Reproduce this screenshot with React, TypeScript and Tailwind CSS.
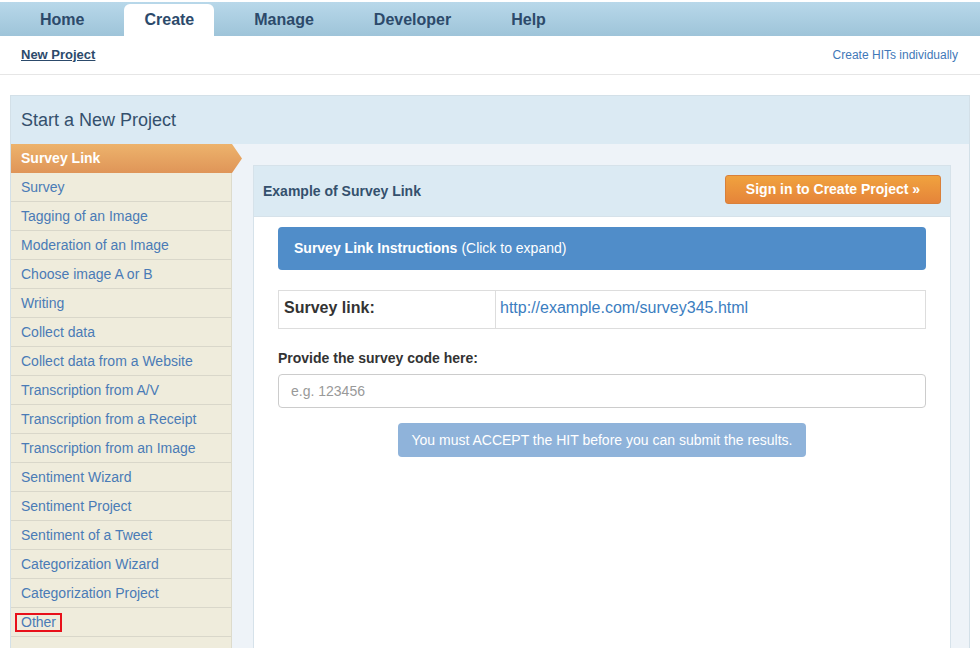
import React from "react";

const items = [
  "Survey",
  "Tagging of an Image",
  "Moderation of an Image",
  "Choose image A or B",
  "Writing",
  "Collect data",
  "Collect data from a Website",
  "Transcription from A/V",
  "Transcription from a Receipt",
  "Transcription from an Image",
  "Sentiment Wizard",
  "Sentiment Project",
  "Sentiment of a Tweet",
  "Categorization Wizard",
  "Categorization Project",
];

export default function App() {
  return (
    <div
      className="w-[980px] min-h-[648px] bg-white"
      style={{ fontFamily: '"Liberation Sans", Arial, Helvetica, sans-serif' }}
    >
      {/* Top nav */}
      <div className="pt-[2px]">
        <div className="h-[34px] bg-gradient-to-b from-[#b8d8ea] to-[#9ec4d9] flex items-end gap-5 pl-5">
          {["Home", "Create", "Manage", "Developer", "Help"].map((t) => (
            <div
              key={t}
              className={
                t === "Create"
                  ? "h-[32px] px-5 bg-white rounded-t-[6px] flex items-center text-[16px] font-bold text-[#2c4a6b]"
                  : "h-[32px] px-5 flex items-center text-[16px] font-bold text-[#2c4a6b]"
              }
            >
              {t}
            </div>
          ))}
        </div>
      </div>

      {/* Sub nav */}
      <div className="h-[39px] flex items-center justify-between pl-[21px] pr-[22px] border-b border-[#e6e6e6]">
        <span className="text-[13px] font-bold text-[#2c4a6b] underline">New Project</span>
        <span className="text-[12px] text-[#3f78b8]">Create HITs individually</span>
      </div>

      {/* Outer panel */}
      <div className="mt-5 ml-[10px] w-[960px] border border-[#d3e0e8]">
        <div className="h-[48px] bg-[#dbeaf3] flex items-center pl-[10px] text-[18px] text-[#34506d]">
          Start a New Project
        </div>
        <div className="flex bg-[#eef3f8]">
          {/* Sidebar */}
          <div className="w-[221px] shrink-0 bg-[#efecdc] border-r border-[#dddbcc]">
            <div className="relative h-[29px] bg-gradient-to-b from-[#edb36c] to-[#df9558] flex items-center pl-[10px] pb-[1px] text-[14px] font-bold text-white">
              Survey Link
              <svg
                className="absolute right-[-11px] top-0"
                width="11"
                height="29"
                viewBox="0 0 11 29"
              >
                <defs>
                  <linearGradient id="ag" x1="0" y1="0" x2="0" y2="1">
                    <stop offset="0" stopColor="#edb36c" />
                    <stop offset="1" stopColor="#df9558" />
                  </linearGradient>
                </defs>
                <polygon points="0,0 1,0 11,14.5 1,29 0,29" fill="url(#ag)" />
              </svg>
            </div>
            {items.map((t) => (
              <div
                key={t}
                className="h-[29px] flex items-center pl-[10px] text-[14px] text-[#4a7bb6] border-b border-[#d9d7ca]"
              >
                {t}
              </div>
            ))}
            <div className="h-[29px] flex items-center pl-[4px] border-b border-[#d9d7ca]">
              <span className="border-2 border-[#e8101a] px-[4px] leading-[14px] text-[14px] text-[#4a7bb6] h-[19px] flex items-center">
                Other
              </span>
            </div>
            <div className="h-[40px]"></div>
          </div>

          {/* Content */}
          <div className="flex-1 pl-[21px] pr-[18px] pt-[21px]">
            <div className="border border-[#d6e2ea] bg-white min-h-[500px]">
              <div className="h-[51px] bg-[#dbeaf3] border-b border-[#d6e2ea] flex items-start justify-between pl-[9px] pr-[9px]">
                <span className="text-[14px] font-bold text-[#34506d] mt-[15px]">Example of Survey Link</span>
                <div className="mt-[9px] h-[29px] w-[216px] rounded-[3px] bg-gradient-to-b from-[#f0a23e] to-[#e5843a] border border-[#d9803a] flex items-center justify-center text-[14px] font-bold text-white">
                  Sign in to Create Project »
                </div>
              </div>
              <div className="px-[24px] pt-[10px]">
                <div className="h-[43px] rounded-[4px] bg-[#508dc9] flex items-center pl-[16px] text-[14px] text-white">
                  <span className="font-bold">Survey Link Instructions</span>
                  <span className="ml-[4px]">(Click to expand)</span>
                </div>
                <div className="mt-5 h-[39px] border border-[#dddddd] flex">
                  <div className="w-[217px] border-r border-[#dddddd] flex items-center pl-[5px] pb-[3px] text-[16px] font-bold text-[#333333]">
                    Survey link:
                  </div>
                  <div className="flex items-center pl-[4px] pb-[3px] text-[16px] text-[#3b7dc0]">
                    http://example.com/survey345.html
                  </div>
                </div>
                <div className="mt-[20px] text-[14px] font-bold text-[#333333] leading-[18px]">
                  Provide the survey code here:
                </div>
                <div className="mt-[7px] h-[34px] rounded-[4px] border border-[#cccccc] flex items-center pl-[12px] text-[14px] text-[#999999]">
                  e.g. 123456
                </div>
                <div className="mt-[15px] flex justify-center">
                  <div className="h-[34px] w-[408px] rounded-[4px] bg-[#8fb3da] flex items-center justify-center text-[14px] text-white">
                    You must ACCEPT the HIT before you can submit the results.
                  </div>
                </div>
              </div>
            </div>
          </div>
        </div>
      </div>
    </div>
  );
}
